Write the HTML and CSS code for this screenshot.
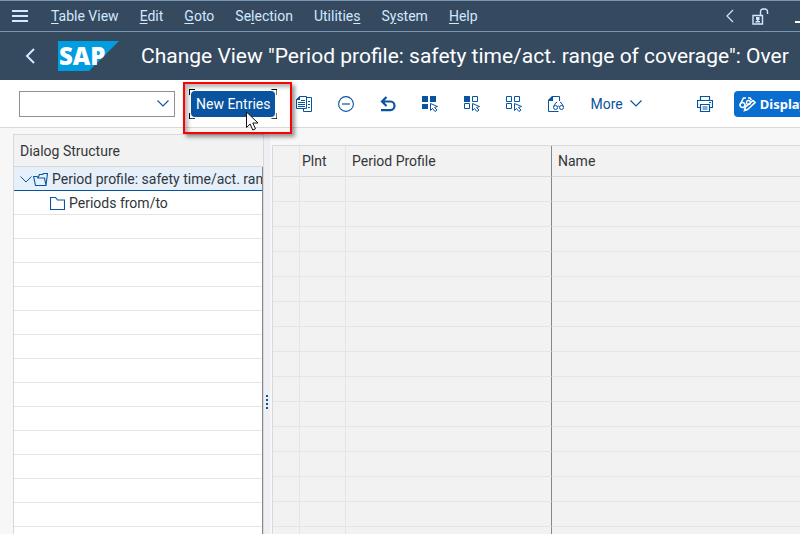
FILE: index.html
```
<!DOCTYPE html>
<html lang="en">
<head>
  <meta charset="UTF-8">
  <meta name="viewport" content="width=device-width, initial-scale=1.0">
  <title>Change View "Period profile: safety time/act. range of coverage": Overview</title>
  <link rel="stylesheet" href="styles.css">
</head>
<body>
  <header class="menubar">
    <button class="menu-toggle" type="button" aria-label="Menu">
      <svg width="16" height="12" viewBox="0 0 16 12"><path d="M0 1h16M0 6h16M0 11h16" stroke="#d1e8ff" stroke-width="2"/></svg>
    </button>
    <nav class="menu">
      <a href="#"><u>T</u>able View</a>
      <a href="#"><u>E</u>dit</a>
      <a href="#"><u>G</u>oto</a>
      <a href="#">Se<u>l</u>ection</a>
      <a href="#">Utilitie<u>s</u></a>
      <a href="#">S<u>y</u>stem</a>
      <a href="#"><u>H</u>elp</a>
    </nav>
    <div class="window-tools">
      <button type="button" aria-label="Previous">
        <svg width="8" height="14" viewBox="0 0 8 14"><path d="M7 1L1 7l6 6" fill="none" stroke="#d1e8ff" stroke-width="1.2"/></svg>
      </button>
      <button type="button" aria-label="Unlock">
        <svg width="17" height="17" viewBox="0 0 17 17"><path d="M1 7.500h9.500v8.500H1zM8.500 7V3.500a2.500 2.500 0 0 1 2.500-2.500h2a2.500 2.500 0 0 1 2.500 2.500V6" fill="none" stroke="#d1e8ff" stroke-width="1.400"/><path d="M4 9h3.500v3H4zM5 11h1.500v2H8v1.500H3.500V13H5z" fill="#d1e8ff"/></svg>
      </button>
      <button type="button" aria-label="Minimize">
        <svg width="5" height="16" viewBox="0 0 5 16"><path d="M0 14h5" stroke="#fff" stroke-width="2"/></svg>
      </button>
    </div>
  </header>

  <div class="titlebar">
    <button class="back" type="button" aria-label="Back">
      <svg width="10" height="16" viewBox="0 0 10 16"><path d="M9 1L2 8l7 7" fill="none" stroke="#d1e8ff" stroke-width="2"/></svg>
    </button>
    <svg class="logo" width="61" height="30" viewBox="0 0 61 30">
      <path d="M0 0h61L31 30H0z" fill="#009de0"/>
      <text class="logo-text" x="1" y="24">SAP</text>
    </svg>
    <h1>Change View "Period profile: safety time/act. range of coverage": Over</h1>
  </div>

  <div class="toolbar">
    <div class="command">
      <input type="text" aria-label="Command">
      <button type="button" aria-label="Show commands">
        <svg width="12" height="7" viewBox="0 0 12 7"><path d="M.5.5L6 6 11.500.5" fill="none" stroke="#0854a0" stroke-width="1.100"/></svg>
      </button>
    </div>

    <div class="focused">
      <button class="new-entries" type="button">New Entries</button>
      <svg class="corners" viewBox="0 0 88 30"><path d="M.5 6V.5H6M82 .5h5.500V6M.5 24v5.500H6M82 29.500h5.500V24" fill="none" stroke="#000"/></svg>
      <div class="highlight"></div>
      <svg class="pointer" width="13" height="20" viewBox="0 0 13 20"><path d="M.5 1v15.500l3.600-3.500 2.700 6 2.700-1.200L6.800 12H12z" fill="#fff" stroke="#111"/></svg>
    </div>

    <button class="tool" type="button" aria-label="Copy As">
      <svg width="16" height="16" viewBox="0 0 16 16"><path d="M3.500.5h7v12H.5v-9zM10.500 1.500h5v14h-8v-3" fill="none" stroke="#0854a0"/><path d="M0 4l4-4v4z" fill="#0854a0"/><path d="M2 6.500h7M2 8.500h7M2 10.500h7M5 4.500h4M12 5.500h2M12 8.500h2M12 11.500h2" stroke="#0854a0"/></svg>
    </button>
    <button class="tool" type="button" aria-label="Delete">
      <svg width="16" height="16" viewBox="0 0 16 16"><circle cx="8" cy="8" r="7.400" fill="none" stroke="#0854a0" stroke-width="1.100"/><path d="M4 8h8" stroke="#0854a0" stroke-width="1.200"/></svg>
    </button>
    <button class="tool" type="button" aria-label="Undo">
      <svg width="16" height="16" viewBox="0 0 16 16"><path d="M6.500 1L2 5.500 6.500 10M2 5.500h8.500a4 4.300 0 0 1 0 8.600H1" fill="none" stroke="#0854a0" stroke-width="2.200"/></svg>
    </button>
    <button class="tool" type="button" aria-label="Select All">
      <svg width="16" height="16" viewBox="0 0 16 16"><path d="M0 0h6v6H0zM8 0h6v6H8zM0 8h6v5H0z" fill="#0854a0"/><path d="M8.500 7.500v7l2-2 2.500 3 2-1.500-2.500-2.500 3-1z" fill="none" stroke="#0854a0"/></svg>
    </button>
    <button class="tool" type="button" aria-label="Select Block">
      <svg width="16" height="16" viewBox="0 0 16 16"><path d="M0 0h6v6H0z" fill="#0854a0"/><path d="M8.500.5h5v5h-5zM.5 7.500h5v5h-5zM8.500 7.500v7l2-2 2.500 3 2-1.500-2.500-2.500 3-1z" fill="none" stroke="#0854a0"/></svg>
    </button>
    <button class="tool" type="button" aria-label="Deselect All">
      <svg width="16" height="16" viewBox="0 0 16 16"><path d="M.5.5h5v5h-5zM8.500.5h5v5h-5zM.5 7.500h5v5h-5zM8.500 7.500v7l2-2 2.500 3 2-1.500-2.500-2.500 3-1z" fill="none" stroke="#0854a0"/></svg>
    </button>
    <button class="tool" type="button" aria-label="Details">
      <svg width="16" height="16" viewBox="0 0 16 16"><path d="M4 .5h7.500V5M.5 4v11.500h10" fill="none" stroke="#0854a0"/><path d="M0 5V4l4-4h1v5z" fill="#0854a0"/><path d="M5.500 10.500L8 6.500h1M15.500 10.500L13 6.500h-1M9.500 10.500q1-1 2 0" fill="none" stroke="#0854a0"/><circle cx="7.500" cy="11.500" r="2" fill="none" stroke="#0854a0"/><circle cx="13.500" cy="11.500" r="2" fill="none" stroke="#0854a0"/></svg>
    </button>
    <button class="more" type="button">More
      <svg width="12" height="7" viewBox="0 0 12 7"><path d="M.5.5L6 6 11.500.5" fill="none" stroke="#0854a0" stroke-width="1.200"/></svg>
    </button>
    <button class="tool" type="button" aria-label="Print">
      <svg width="16" height="16" viewBox="0 0 16 16"><path d="M3.500 4V.5h9V4M3.500 11.500h-3v-7h15v7h-3M3.500 8.500h9v7h-9zM5.500 11h5M5.500 13h5M12 6.500h2" fill="none" stroke="#0854a0" stroke-width="1.200"/></svg>
    </button>
    <button class="display" type="button">
      <svg width="17" height="16" viewBox="0 0 17 16"><path d="M1.500 8L4.500 2H7M9 2h2l1.500 2" fill="none" stroke="#fff" stroke-width="1.600"/><circle cx="3.500" cy="9" r="2.500" fill="none" stroke="#fff" stroke-width="1.700"/><circle cx="9.500" cy="6.500" r="2" fill="none" stroke="#fff" stroke-width="1.300"/><path d="M5.500 14.500l1-3.500 7.500-6.500 2 2-7.500 7z" fill="none" stroke="#fff" stroke-width="1.600"/></svg>
      Display
    </button>
  </div>

  <main class="content">
    <section class="structure">
      <h2>Dialog Structure</h2>
      <ul class="tree">
        <li class="selected">
          <svg width="12" height="7" viewBox="0 0 12 7"><path d="M.5.5L6 6 11.500.5" fill="none" stroke="#0854a0"/></svg>
          <svg class="folder-open" width="15" height="13" viewBox="0 0 15 13"><path d="M.6 3.500h3.400l1 1.500h6.500l1.500 7.500H2.500zM5 4.500L6.500 1.500h3l1-1h4L13 12" fill="none" stroke="#0854a0" stroke-width="1.100"/></svg>
          <a href="#">Period profile: safety time/act. range of coverage</a>
        </li>
        <li class="child">
          <svg width="15" height="13" viewBox="0 0 15 13"><path d="M.5.5h5l2 2.500h7v9.500H.5z" fill="none" stroke="#0854a0" stroke-width="1.100"/></svg>
          <a href="#">Periods from/to</a>
        </li>
        <li></li><li></li><li></li><li></li><li></li><li></li><li></li>
        <li></li><li></li><li></li><li></li><li></li><li></li><li></li>
      </ul>
    </section>

    <div class="splitter">
      <svg width="2" height="14" viewBox="0 0 2 14"><path d="M0 0h2v2H0zM0 4h2v2H0zM0 8h2v2H0zM0 12h2v2H0z" fill="#0854a0"/></svg>
    </div>

    <section class="grid">
      <table>
        <thead>
          <tr><th class="col-mark"></th><th class="col-plant">Plnt</th><th class="col-profile">Period Profile</th><th>Name</th></tr>
        </thead>
        <tbody>
          <tr><td></td><td></td><td></td><td></td></tr>
          <tr><td></td><td></td><td></td><td></td></tr>
          <tr><td></td><td></td><td></td><td></td></tr>
          <tr><td></td><td></td><td></td><td></td></tr>
          <tr><td></td><td></td><td></td><td></td></tr>
          <tr><td></td><td></td><td></td><td></td></tr>
          <tr><td></td><td></td><td></td><td></td></tr>
          <tr><td></td><td></td><td></td><td></td></tr>
          <tr><td></td><td></td><td></td><td></td></tr>
          <tr><td></td><td></td><td></td><td></td></tr>
          <tr><td></td><td></td><td></td><td></td></tr>
          <tr><td></td><td></td><td></td><td></td></tr>
          <tr><td></td><td></td><td></td><td></td></tr>
          <tr><td></td><td></td><td></td><td></td></tr>
          <tr><td></td><td></td><td></td><td></td></tr>
        </tbody>
      </table>
    </section>
  </main>
</body>
</html>
```

FILE: styles.css
```
* {
  box-sizing: border-box;
}

body {
  margin: 0;
  height: 100vh;
  display: flex;
  flex-direction: column;
  overflow: hidden;
  font-family: Roboto, sans-serif;
  font-size: 14px;
  color: #32363a;
  background-color: #f7f7f7;
}

button {
  display: flex;
  align-items: center;
  flex-shrink: 0;
  padding: 0;
  border: none;
  background: none;
  font-family: inherit;
  font-size: 14px;
  color: #0854a0;
  cursor: pointer;
}

a {
  color: inherit;
  text-decoration: none;
}

svg {
  display: block;
  flex-shrink: 0;
}

/* header */
.menubar {
  display: flex;
  align-items: center;
  flex-shrink: 0;
  height: 32px;
  padding-left: 12px;
  background-color: #354a5f;
  border-top: 1px solid #7996b4;
  border-bottom: 1px solid #7996b4;
  color: #d1e8ff;
}

.menu {
  display: flex;
  gap: 21px;
  margin-left: 23px;
  white-space: nowrap;
}

.menu u {
  text-underline-offset: 2px;
}

.window-tools {
  display: flex;
  align-items: center;
  margin-left: auto;
}

.window-tools button {
  margin-left: 18px;
}

.window-tools button:last-child {
  margin-left: 26px;
}

.titlebar {
  display: flex;
  align-items: center;
  flex-shrink: 0;
  height: 48px;
  padding-left: 25px;
  background-color: #354a5f;
}

.logo {
  margin: 0 22px 0 23px;
}

.logo-text {
  font-family: "Open Sans", sans-serif;
  font-size: 24px;
  font-weight: 800;
  fill: #fff;
}

h1 {
  margin: 0;
  font-size: 21px;
  font-weight: normal;
  color: #fff;
  white-space: nowrap;
}

/* toolbar */
.toolbar {
  display: flex;
  align-items: center;
  flex-shrink: 0;
  height: 48px;
  padding-left: 19px;
  background-color: #fff;
  border-bottom: 1px solid #d9d9d9;
}

.command {
  display: flex;
  flex-shrink: 0;
  width: 156px;
  height: 26px;
  border: 1px solid #89919a;
}

.command input {
  flex: 1;
  min-width: 0;
  border: none;
  outline: none;
}

.command button {
  padding: 0 5px;
}

.focused {
  position: relative;
  flex-shrink: 0;
  margin: 0 8px 0 16px;
}

.new-entries {
  height: 26px;
  padding: 0 5px;
  border-radius: 4px;
  background-color: #0854a0;
  color: #fff;
}

.corners {
  position: absolute;
  inset: -2px;
}

.highlight {
  position: absolute;
  inset: -9px -17px -17px -8px;
  border: 2px solid #f00;
  box-shadow: 3px 3px 4px rgba(0, 0, 0, 0.4), inset 3px 3px 4px rgba(0, 0, 0, 0.3);
  pointer-events: none;
}

.pointer {
  position: absolute;
  left: 55px;
  top: 20px;
}

.tool {
  justify-content: center;
  width: 42px;
  height: 26px;
}

.more {
  gap: 7px;
  height: 26px;
  padding: 0 13px;
  margin-right: 29px;
}

.display {
  gap: 4px;
  height: 26px;
  margin-left: 8px;
  padding: 0 5px;
  border-radius: 4px;
  background-color: #0a6ed1;
  font-family: "Noto Sans", sans-serif;
  font-size: 13px;
  font-weight: bold;
  color: #fff;
}

/* content */
.content {
  display: flex;
  flex: 1;
  min-height: 0;
  padding-left: 13px;
}

.structure {
  width: 251px;
  flex-shrink: 0;
  margin-top: 6px;
  border: 1px solid #d9d9d9;
  border-bottom: none;
  background-color: #fff;
  overflow: hidden;
}

h2 {
  margin: 0;
  padding: 2px 0 0 6px;
  background-color: #f2f2f2;
  border-bottom: 1px solid #d9d9d9;
  font-size: 14px;
  font-weight: normal;
  line-height: 29px;
}

.tree {
  margin: 0;
  padding: 0;
  border-right: 1px solid #888;
  list-style: none;
}

.tree li {
  display: flex;
  align-items: center;
  height: 24px;
  padding: 1px 0 0 6px;
  border-bottom: 1px solid #e5e5e5;
  overflow: hidden;
  white-space: nowrap;
}

.tree .selected {
  background-color: #e5f0fa;
  border-bottom-color: #0854a0;
}

.tree .child {
  padding-left: 36px;
}

.folder-open {
  margin-left: 1px;
}

.tree a {
  margin-left: 4px;
}

.splitter {
  display: flex;
  align-items: center;
  justify-content: center;
  flex-shrink: 0;
  width: 6px;
  margin-top: 6px;
  background-color: #edeff2;
}

.splitter svg {
  margin-top: 136px;
}

.grid {
  flex: 1;
  min-width: 0;
  margin: 17px 0 0 2px;
  border-top: 1px solid #d9d9d9;
  border-left: 1px solid #d9d9d9;
  background-color: #f2f2f2;
  overflow: hidden;
}

table {
  width: 100%;
  table-layout: fixed;
  border-spacing: 0;
}

th,
td {
  height: 25px;
  padding: 0 6px;
  border-right: 1px solid #e5e5e5;
  border-bottom: 1px solid #e5e5e5;
  font-weight: normal;
  text-align: left;
}

th {
  height: 31px;
  border-bottom-color: #d9d9d9;
}

th:nth-child(3),
td:nth-child(3) {
  border-right-color: #888;
}

th:last-child,
td:last-child {
  border-right: none;
}

.col-mark {
  width: 27px;
}

.col-plant {
  width: 46px;
  padding: 0 2px;
}

.col-profile {
  width: 206px;
}
```
